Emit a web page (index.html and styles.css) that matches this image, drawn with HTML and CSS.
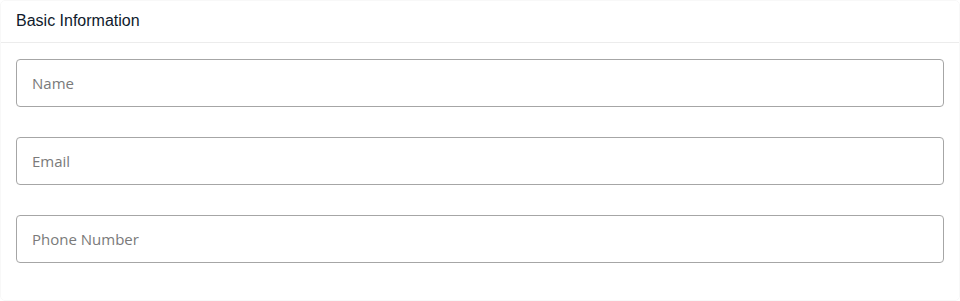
FILE: index.html
```html
<!DOCTYPE html>
<html lang="en">
<head>
    <meta charset="UTF-8">
    <meta name="viewport" content="width=device-width, initial-scale=1.0">
    <title>Basic Information</title>
    <link rel="stylesheet" href="styles.css">
</head>
<body>
    <div class="info-card">
        <div class="info-header">Basic Information</div>
        <form class="info-body">
            <input class="info-input" type="text" placeholder="Name">
            <input class="info-input" type="email" placeholder="Email">
            <input class="info-input" type="tel" placeholder="Phone Number">
        </form>
    </div>
</body>
</html>
```

FILE: styles.css
```css
body {
    margin: 0;
    background-color: #fff;
    font-family: 'Liberation Sans', Arial, sans-serif;
}
.info-card {
    box-sizing: border-box;
    height: 301px;
    background: #fff;
    border: 1px solid #f8f8f8;
    border-radius: 5px;
}
.info-header {
    padding: 10px 15px 11px;
    font-size: 16px;
    line-height: 20px;
    color: #0f1a2c;
    border-bottom: 1px solid #ececec;
}
.info-body {
    display: flex;
    flex-direction: column;
    gap: 30px;
    margin: 0;
    padding: 16px 15px 0;
}
.info-input {
    box-sizing: border-box;
    height: 48px;
    width: 100%;
    padding: 0 15px;
    border: 1px solid #a6a6a6;
    border-radius: 4px;
    font-family: 'Open Sans', sans-serif;
    font-size: 15px;
    color: #333;
    outline: none;
}
.info-input::placeholder {
    color: #7a7a7a;
}
```
